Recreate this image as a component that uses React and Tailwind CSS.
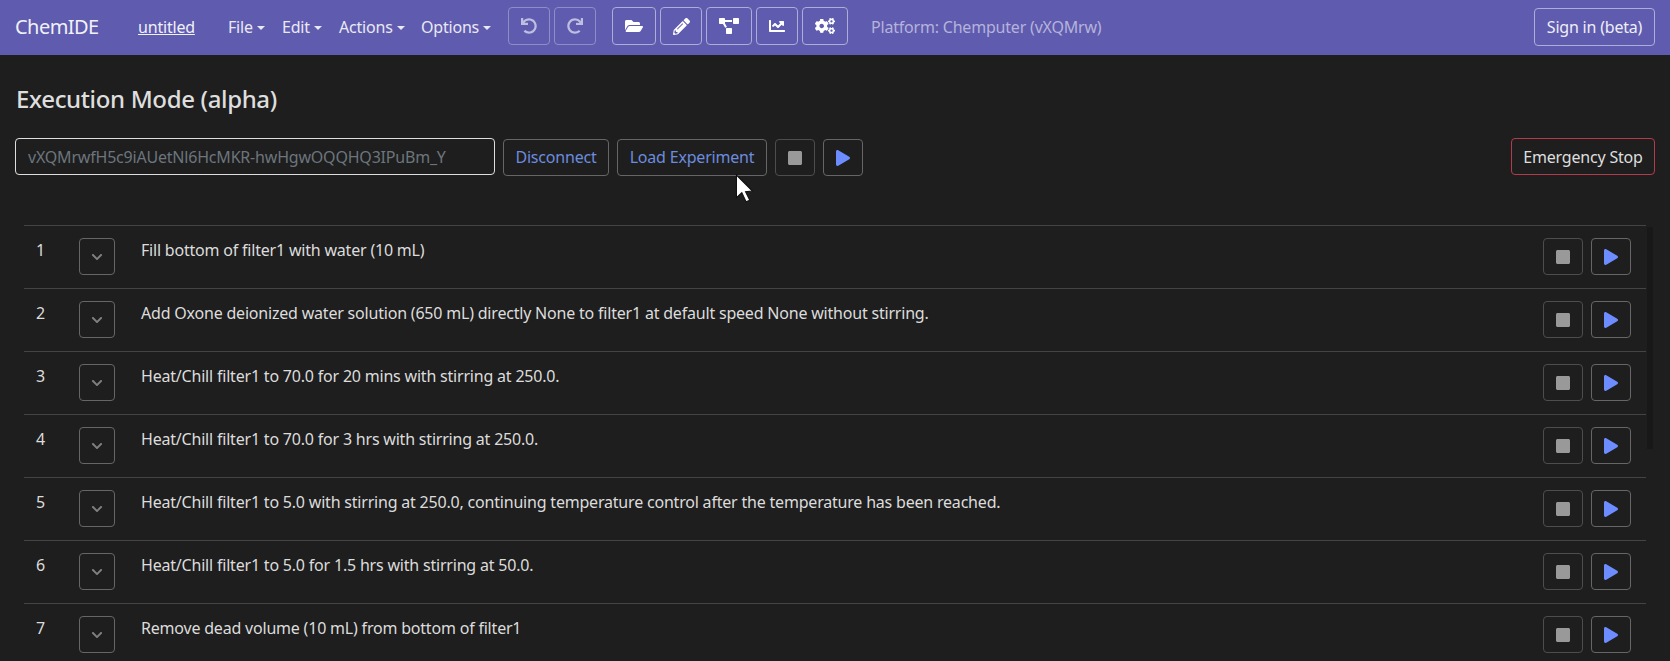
import React from "react";
import { FaUndo, FaRedo, FaFolderOpen, FaPencilAlt, FaProjectDiagram, FaChartLine, FaCogs, FaStop, FaPlay, FaChevronDown } from "react-icons/fa";

const steps = [
  "Fill bottom of filter1 with water (10 mL)",
  "Add Oxone deionized water solution (650 mL) directly None to filter1 at default speed None without stirring.",
  "Heat/Chill filter1 to 70.0 for 20 mins with stirring at 250.0.",
  "Heat/Chill filter1 to 70.0 for 3 hrs with stirring at 250.0.",
  "Heat/Chill filter1 to 5.0 with stirring at 250.0, continuing temperature control after the temperature has been reached.",
  "Heat/Chill filter1 to 5.0 for 1.5 hrs with stirring at 50.0.",
  "Remove dead volume (10 mL) from bottom of filter1",
];

function Caret() {
  return <span className="ml-[4px] inline-block w-0 h-0 border-x-[4px] border-x-transparent border-t-[4px] border-t-[#e9e9f4] align-[3px]" />;
}

function Menu({ label, className }) {
  return <span className={`text-[#e9e9f4] whitespace-nowrap mb-[2px] ${className}`}>{label}<Caret /></span>;
}

function NavBtn({ children, w, dim }) {
  return (
    <button className={`h-[38px] ${w} flex items-center justify-center rounded-[4px] border ${dim ? "border-[#8f8dc6] text-[#bfbde0]" : "border-[#aeacd8] text-white"}`}>
      {children}
    </button>
  );
}

function IconBtn({ kind, className }) {
  return (
    <button className={`h-[37px] w-[40px] flex items-center justify-center rounded-[4px] border ${kind === "stop" ? "border-[#4d4d4d]" : "border-[#666666]"} ${className || ""}`}>
      {kind === "stop" ? <FaStop className="text-[16px] text-[#999999]" /> : <FaPlay className="text-[16px] text-[#6c8cff]" />}
    </button>
  );
}

function Row({ n, text }) {
  return (
    <div className="flex h-[63px] border-t border-[#444444] items-start">
      <div className="w-[55px] pl-[12px] pt-[12px] leading-[24px] text-[#dcdcdc]">{n}</div>
      <button className="mt-[12px] h-[37px] w-[36px] flex items-center justify-center rounded-[4px] border border-[#666666]">
        <FaChevronDown className="text-[12px] text-[#808080]" />
      </button>
      <div className="flex-1 pl-[26px] pt-[12px] leading-[24px] text-[#dcdcdc] whitespace-nowrap">{text}</div>
      <div className="flex gap-[8px] mt-[12px] mr-[15px]">
        <IconBtn kind="stop" />
        <IconBtn kind="play" />
      </div>
    </div>
  );
}

export default function App() {
  return (
    <div className="relative h-[661px] w-[1670px] overflow-hidden bg-[#1e1e1e] text-[16px] tracking-[-0.2px] font-['Noto_Sans','Open_Sans',sans-serif]">
      <nav className="h-[55px] bg-[#5f5bae] flex items-center pl-[15px] pr-[15px]">
        <span className="text-[20px] tracking-[-0.55px] text-[#f1f1f8] w-[123px] mb-[2px]">ChemIDE</span>
        <span className="underline text-[#f1f1f8] w-[90px] mb-[2px]">untitled</span>
        <Menu label="File" className="w-[54px]" />
        <Menu label="Edit" className="w-[57px]" />
        <Menu label="Actions" className="w-[82px]" />
        <Menu label="Options" className="w-[83px]" />
        <div className="flex gap-[4px] ml-[4px] mb-[3px]">
          <NavBtn w="w-[42px]" dim><FaUndo className="text-[16px]" /></NavBtn>
          <NavBtn w="w-[42px]" dim><FaRedo className="text-[16px]" /></NavBtn>
        </div>
        <div className="flex gap-[4px] ml-[16px] mb-[3px]">
          <NavBtn w="w-[44px]"><FaFolderOpen className="text-[18px]" /></NavBtn>
          <NavBtn w="w-[42px]"><FaPencilAlt className="text-[17px]" /></NavBtn>
          <NavBtn w="w-[46px]"><FaProjectDiagram className="text-[20px]" /></NavBtn>
          <NavBtn w="w-[42px]"><FaChartLine className="text-[16px]" /></NavBtn>
          <NavBtn w="w-[46px]"><FaCogs className="text-[20px]" /></NavBtn>
        </div>
        <span className="ml-[23px] mb-[2px] text-[#b5b3dc] whitespace-nowrap">Platform: Chemputer (vXQMrw)</span>
        <button className="ml-auto mb-[1px] h-[38px] w-[121px] rounded-[4px] border border-[#aeacd8] text-[#eeeef7] whitespace-nowrap">Sign in (beta)</button>
      </nav>

      <main className="pl-[15px] pr-[15px]">
        <h1 className="pt-[26px] pb-[2px] pl-[1px] text-[24px] tracking-[-0.35px] leading-[36px] font-medium text-[#dedede]">Execution Mode (alpha)</h1>
        <div className="mt-[19px] flex items-start">
          <input
            readOnly
            placeholder="vXQMrwfH5c9iAUetNl6HcMKR-hwHgwOQQHQ3IPuBm_Y"
            className="h-[37px] w-[480px] rounded-[4px] border border-[#dedede] bg-transparent px-[12px] placeholder:text-[#6c757d] outline-none"
          />
          <button className="ml-[8px] mt-[1px] pb-[2px] h-[37px] w-[106px] rounded-[4px] border border-[#666666] text-[#6c8cdf] whitespace-nowrap">Disconnect</button>
          <button className="ml-[8px] mt-[1px] pb-[2px] h-[37px] w-[150px] rounded-[4px] border border-[#666666] text-[#6c8cdf] whitespace-nowrap">Load Experiment</button>
          <IconBtn kind="stop" className="ml-[8px] mt-[1px]" />
          <IconBtn kind="play" className="ml-[8px] mt-[1px]" />
          <button className="ml-auto h-[37px] w-[144px] rounded-[4px] border border-[#b23b4c] text-[#dedede] whitespace-nowrap">Emergency Stop</button>
        </div>
        <div className="mt-[49px] ml-[9px] mr-[9px]">
          {steps.map((s, i) => <Row key={i} n={i + 1} text={s} />)}
        </div>
      </main>

      <div className="absolute left-[1647px] top-[227px] h-[222px] w-[6px] bg-[#181818]" />
      <svg className="absolute left-[733px] top-[173px]" width="24" height="32" viewBox="0 0 22 30">
        <path d="M3 2 L3 23 L8 18.5 L12 27 L15.5 25.5 L11.5 17.5 L18 17 Z" fill="#ffffff" stroke="#111111" strokeWidth="1" />
      </svg>
    </div>
  );
}
